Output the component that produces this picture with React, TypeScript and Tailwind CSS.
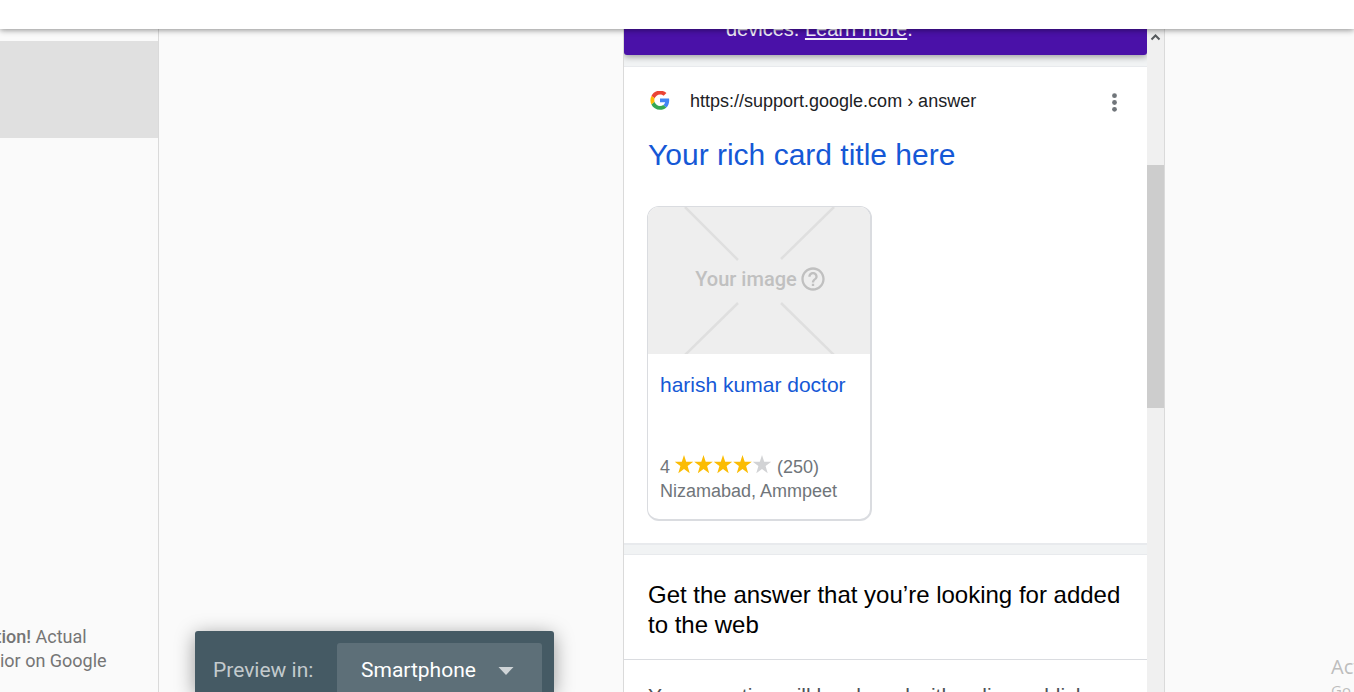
import React from "react";

function GoogleLogo() {
  return (
    <svg viewBox="-1 1 50 50" className="size-5" aria-hidden="true">
      <path fill="#EA4335" d="M24 9.5c3.54 0 6.71 1.22 9.21 3.6l6.85-6.85C35.9 2.38 30.47 0 24 0 14.62 0 6.51 5.38 2.56 13.22l7.98 6.19C12.43 13.72 17.74 9.5 24 9.5z" />
      <path fill="#4285F4" d="M46.98 24.55c0-1.57-.15-3.09-.38-4.55H24v9.02h12.94c-.58 2.96-2.26 5.48-4.78 7.18l7.73 6c4.51-4.18 7.09-10.36 7.09-17.65z" />
      <path fill="#FBBC05" d="M10.53 28.59c-.48-1.45-.76-2.99-.76-4.59s.27-3.14.76-4.59l-7.98-6.19C.92 16.46 0 20.12 0 24c0 3.88.92 7.54 2.56 10.78l7.97-6.19z" />
      <path fill="#34A853" d="M24 48c6.48 0 11.93-2.13 15.89-5.81l-7.73-6c-2.15 1.45-4.92 2.3-8.16 2.3-6.26 0-11.57-4.22-13.47-9.91l-7.98 6.19C6.51 42.62 14.62 48 24 48z" />
    </svg>
  );
}

function Stars({ value }: { value: number }) {
  return (
    <svg viewBox="0 0 98 24" className="h-6 w-[98px] shrink-0" role="img" aria-label={`${value} of 5 stars`}>
      {[0, 1, 2, 3, 4].map((i) => (
        <path
          key={i}
          transform={`translate(${i * 19.5} 0)`}
          fill={i < value ? "#fbbc04" : "#d2d3d5"}
          d="M10 0.100l2.200 6.700h7.100l-5.700 4.300 2.100 7.200-5.700-4.300-5.700 4.300 2.100-7.200L0.700 6.800h7.100z"
        />
      ))}
    </svg>
  );
}

function ImagePlaceholder() {
  return (
    <div className="grid h-[147px] place-items-center bg-[#eeeeee]">
      <svg viewBox="0 0 222 147" className="col-start-1 row-start-1 h-full w-full" aria-hidden="true">
        <g stroke="#dfdfdf" strokeWidth="2.5" fill="none">
          <path d="M37 0L90 53M186 0L133 52M90 96L37 148M133 96L186 148" />
        </g>
      </svg>
      <div className="col-start-1 row-start-1 flex items-center gap-0.5 pb-1 pl-1 text-[#c0c0c0]">
        <span className="font-[Roboto] text-[20px] leading-6 font-medium">Your image</span>
        <svg viewBox="0 0 24 24" className="size-7" fill="currentColor" aria-hidden="true">
          <path d="M11 18h2v-2h-2v2zm1-16C6.48 2 2 6.48 2 12s4.480 10 10 10 10-4.480 10-10S17.520 2 12 2zm0 18c-4.410 0-8-3.590-8-8s3.590-8 8-8 8 3.590 8 8-3.590 8-8 8zm0-14c-2.210 0-4 1.790-4 4h2c0-1.100.9-2 2-2s2 .9 2 2c0 2-3 1.750-3 5h2c0-2.250 3-2.500 3-5 0-2.210-1.790-4-4-4z" />
        </svg>
      </div>
    </div>
  );
}

function RichCard() {
  return (
    <article className="w-[225px] overflow-hidden rounded-xl border border-r-2 border-b-2 border-[#dadce0] bg-white text-[18px] leading-6 text-[#70757a]">
      <ImagePlaceholder />
      <div className="px-3 pt-[17px] pb-4">
        <h3 className="h-[84px] text-[21px] leading-7">
          <a href="#doctor" className="whitespace-nowrap text-[#1558d6]">harish kumar doctor</a>
        </h3>
        <div className="flex items-center">
          <span className="w-[14px]">4</span>
          <Stars value={4} />
          <span className="pl-[5px]">(250)</span>
        </div>
        <p className="whitespace-nowrap">Nizamabad, Ammpeet</p>
      </div>
    </article>
  );
}

function SearchResults() {
  return (
    <div className="flex min-w-0 flex-1 flex-col overflow-hidden bg-[#f1f3f4]">
      <div className="flex h-[26px] shrink-0 items-end rounded-b-[3px] bg-[#4a11a8] shadow-[0_2px_6px_rgba(0,0,0,0.35)]">
        <p className="pb-3 pl-[102px] text-[20px] leading-7 text-[#f1eef9]">
          devices. <a href="#learn" className="underline underline-offset-2">Learn more</a>.
        </p>
      </div>
      <section className="mt-[11px] shrink-0 border-t border-b-2 border-[#e8eaed] bg-white pb-[22px]">
        <header className="flex items-center pt-[22px] pr-5 pl-[26px]">
          <GoogleLogo />
          <cite className="flex-1 pl-5 text-[18px] leading-6 text-[#202124] not-italic">
            https://support.google.com › answer
          </cite>
          <button type="button" aria-label="More options" className="text-[#70757a]">
            <svg viewBox="0 0 24 24" className="size-6" fill="currentColor" aria-hidden="true">
              <circle cx="11.500" cy="6.700" r="2.400" />
              <circle cx="11.500" cy="13.500" r="2.400" />
              <circle cx="11.500" cy="20.300" r="2.400" />
            </svg>
          </button>
        </header>
        <h2 className="pt-6 pl-6 text-[30px] leading-9 text-[#1558d6]">
          <a href="#result">Your rich card title here</a>
        </h2>
        <div className="pt-[33px] pl-[23px]">
          <RichCard />
        </div>
      </section>
      <section className="mt-[9px] shrink-0 border-t border-[#e8eaed] bg-white">
        <h2 className="border-b border-[#dadce0] px-6 pt-[25px] pb-[19px] text-[24px] leading-[30px] text-black">
          Get the answer that you’re looking for added to the web
        </h2>
        <p className="px-6 pt-[22px] text-[21px] leading-7 whitespace-nowrap text-[#4d5156]">
          Your question will be shared with online publishers
        </p>
      </section>
    </div>
  );
}

function ScrollTrack() {
  return (
    <div className="flex w-[17px] shrink-0 flex-col items-center bg-[#f0f0f0]" aria-hidden="true">
      <svg viewBox="0 0 17 17" className="size-[17px] shrink-0" fill="none" stroke="#55595c" strokeWidth="2">
        <path d="M4.500 10.500L8.500 6.500L12.500 10.500" />
      </svg>
      <div className="mt-[119px] h-[243px] w-full bg-[#cdcdcd]" />
    </div>
  );
}

function PreviewBar() {
  return (
    <div className="flex h-[61px] w-[359px] items-stretch rounded-t-[3px] bg-[#455a64] pt-3 pr-3 pl-[18px] font-[Roboto] text-[21px] shadow-[0_4px_20px_rgba(0,0,0,0.4)]">
      <label htmlFor="device" className="flex-1 pt-[13px] leading-7 text-[#c3cacd]">Preview in:</label>
      <div className="grid w-[205px] rounded-t-[3px] bg-[#5d6f78]">
        <select id="device" defaultValue="Smartphone" className="col-start-1 row-start-1 w-full appearance-none bg-transparent pt-[7px] pl-6 text-white outline-none">
          <option>Smartphone</option>
          <option>Desktop</option>
        </select>
        <svg viewBox="0 0 16 8" className="pointer-events-none col-start-1 row-start-1 mt-6 mr-7 h-2 w-4 justify-self-end" fill="#cfd4d7" aria-hidden="true">
          <path d="M0.500 0h15l-7.500 8z" />
        </svg>
      </div>
    </div>
  );
}

export default function App() {
  return (
    <div className="flex h-screen flex-col overflow-hidden bg-[#fafafa] font-['Liberation_Sans',Arial,sans-serif]">
      <header className="relative z-10 h-[29px] shrink-0 bg-white shadow-[0_1px_6px_rgba(0,0,0,0.45)]" />
      <main className="flex min-h-0 flex-1">
        <aside className="flex w-[159px] shrink-0 flex-col justify-between overflow-hidden border-r border-[#dadada] pt-3 pb-[19px]">
          <div className="h-[97px] bg-[#e0e0e0]" />
          <p className="-ml-12 font-[Roboto] text-[18px] leading-6 whitespace-nowrap text-[#757575]">
            <strong className="font-medium">Attention!</strong> Actual
            <br />
            behavior on Google
          </p>
        </aside>
        <div className="flex min-w-0 flex-1 items-end pl-9">
          <PreviewBar />
        </div>
        <div className="flex w-[542px] shrink-0 border-x border-[#dadada]">
          <SearchResults />
          <ScrollTrack />
        </div>
        <div className="flex w-[189px] shrink-0 flex-col justify-end overflow-hidden pl-[166px] font-['Open_Sans','Noto_Sans',sans-serif] whitespace-nowrap text-[#bdbdbd]">
          <div className="h-[38px]">
            <p className="text-[20px] leading-[26px]">Activate Windows</p>
            <p className="text-[15px] leading-5">Go to Settings to activate Windows.</p>
          </div>
        </div>
      </main>
    </div>
  );
}
